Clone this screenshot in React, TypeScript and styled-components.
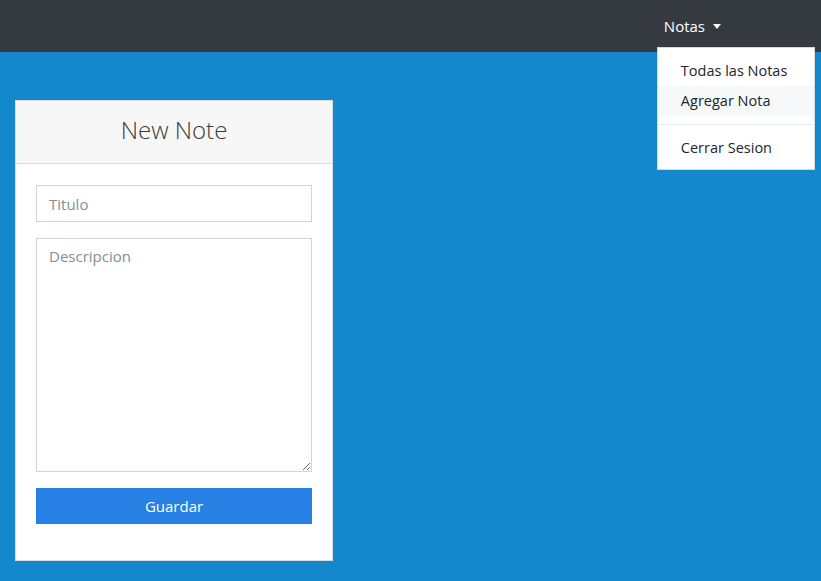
import { createGlobalStyle, styled } from 'styled-components'

const GlobalStyle = createGlobalStyle`
    html, body {
        margin: 0;
        padding: 0;
        background-color: #1488cc;
        font-family: 'Open Sans', 'Noto Sans', sans-serif;
        font-size: 15px;
        color: #373a3c;
    }
`

const Page = styled.div`
    min-height: 581px;
    background-color: #1488cc;
`

const Navbar = styled.nav`
    height: 52px;
    background-color: #343a40;
    display: flex;
    align-items: center;
    justify-content: flex-end;
    padding-right: 92px;
    position: relative;
`

const NavItem = styled.div`
    position: relative;
    height: 100%;
    display: flex;
    align-items: center;
`

const NavToggle = styled.button`
    appearance: none;
    background: none;
    border: none;
    color: #ffffff;
    font-family: inherit;
    font-size: 15px;
    padding: 0 8px;
    display: flex;
    align-items: center;
    gap: 8px;
    cursor: pointer;
`

const Caret = styled.span`
    width: 0;
    height: 0;
    border-left: 4.5px solid transparent;
    border-right: 4.5px solid transparent;
    border-top: 5px solid #ffffff;
`

const Menu = styled.div`
    position: absolute;
    top: 47px;
    left: 1px;
    width: 158px;
    background-color: #ffffff;
    border: 1px solid rgba(0, 0, 0, 0.15);
    box-sizing: border-box;
    padding: 8px 0 6px;
    z-index: 2;
`

const MenuItem = styled.a<{ $active?: boolean }>`
    display: block;
    height: 30px;
    line-height: 30px;
    padding: 0 23px;
    color: #212529;
    font-size: 14.5px;
    white-space: nowrap;
    text-decoration: none;
    background-color: ${(p) => (p.$active ? '#f7f8f9' : 'transparent')};
`

const Divider = styled.div`
    height: 0;
    margin: 8px 0;
    border-top: 1px solid #e9ecef;
`

const Main = styled.main`
    padding: 48px 0 0 15px;
`

const Card = styled.div`
    width: 318px;
    background-color: #ffffff;
    border: 1px solid #dcdcdc;
    box-sizing: border-box;
`

const CardHeader = styled.div`
    height: 63px;
    background-color: #f7f7f7;
    border-bottom: 1px solid #dcdcdc;
    display: flex;
    align-items: center;
    justify-content: center;
    box-sizing: border-box;
`

const Title = styled.h3`
    margin: 0 0 5px;
    font-size: 24px;
    font-weight: 300;
    color: #373a3c;
`

const CardBody = styled.form`
    padding: 21px 20px 36px;
    display: flex;
    flex-direction: column;
    gap: 16px;
`

const Input = styled.input`
    height: 37px;
    box-sizing: border-box;
    border: 1px solid #ced4da;
    padding: 0 12px;
    font-family: inherit;
    font-size: 15px;
    color: #495057;
    outline: none;

    &::placeholder {
        color: #868e96;
    }
`

const TextArea = styled.textarea`
    height: 234px;
    box-sizing: border-box;
    border: 1px solid #ced4da;
    padding: 7px 12px;
    font-family: inherit;
    font-size: 15px;
    color: #495057;
    outline: none;
    resize: vertical;

    &::placeholder {
        color: #868e96;
    }
`

const SubmitButton = styled.button`
    height: 36px;
    border: none;
    background-color: #2780e3;
    color: #ffffff;
    font-family: inherit;
    font-size: 15px;
    cursor: pointer;
`

const App = () => {
    return (
        <Page>
            <GlobalStyle />
            <Navbar>
                <NavItem>
                    <NavToggle>
                        Notas
                        <Caret />
                    </NavToggle>
                    <Menu>
                        <MenuItem href="#">Todas las Notas</MenuItem>
                        <MenuItem href="#" $active>
                            Agregar Nota
                        </MenuItem>
                        <Divider />
                        <MenuItem href="#">Cerrar Sesion</MenuItem>
                    </Menu>
                </NavItem>
            </Navbar>
            <Main>
                <Card>
                    <CardHeader>
                        <Title>New Note</Title>
                    </CardHeader>
                    <CardBody onSubmit={(e) => e.preventDefault()}>
                        <Input placeholder="Titulo" />
                        <TextArea placeholder="Descripcion" />
                        <SubmitButton type="submit">Guardar</SubmitButton>
                    </CardBody>
                </Card>
            </Main>
        </Page>
    )
}

export default App
